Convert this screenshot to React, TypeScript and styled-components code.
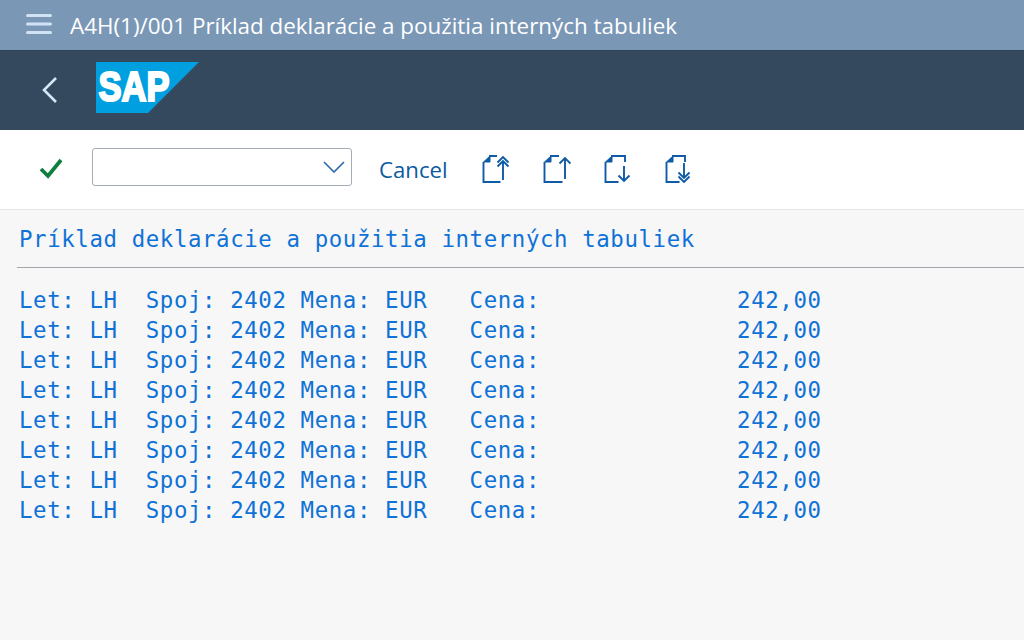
import { createGlobalStyle } from 'styled-components';
import styled from 'styled-components';

const GlobalStyle = createGlobalStyle`
  html, body {
    margin: 0;
    padding: 0;
    height: 100%;
    overflow: hidden;
    background: #f7f7f7;
  }
`;

const Page = styled.div`
  width: 1024px;
  height: 640px;
  display: flex;
  flex-direction: column;
  background: #f7f7f7;
  font-family: 'Open Sans', 'Noto Sans', sans-serif;
`;

const TitleBar = styled.header`
  height: 50px;
  box-sizing: border-box;
  flex: none;
  display: flex;
  align-items: center;
  gap: 18px;
  padding: 0 0 0 26px;
  background: #7b97b6;
`;

const TitleText = styled.span`
  color: #ffffff;
  font-size: 22.4px;
  white-space: nowrap;
`;

const BrandBar = styled.div`
  height: 80px;
  box-sizing: border-box;
  flex: none;
  display: flex;
  align-items: center;
  gap: 38px;
  padding: 0 0 6px 41px;
  background: #34495e;
  border-top: 1px solid #2f4356;
`;

const ToolBar = styled.div`
  height: 80px;
  box-sizing: border-box;
  flex: none;
  display: flex;
  align-items: center;
  padding: 0 0 2px 39px;
  background: #ffffff;
  border-bottom: 1px solid #e5e5e5;
`;

const ComboBox = styled.div`
  width: 260px;
  height: 38px;
  box-sizing: border-box;
  margin: 0 0 4px 29px;
  display: flex;
  align-items: center;
  justify-content: flex-end;
  padding-right: 6px;
  background: #ffffff;
  border: 1px solid #a6acb3;
  border-radius: 3px;
`;

const CancelButton = styled.span`
  margin: 2px 34px 0 27px;
  color: #0a5a9e;
  font-size: 22.2px;
`;

const PageIcons = styled.div`
  display: flex;
  align-items: center;
  gap: 33px;
`;

const ListArea = styled.main`
  flex: 1;
  padding: 14px 0 0 19px;
  color: #0f72d6;
  font-family: 'DejaVu Sans Mono', monospace;
  font-size: 22.4px;
  letter-spacing: 0.6px;
`;

const ListTitle = styled.div`
  height: 30px;
  line-height: 30px;
  white-space: pre;
`;

const Rule = styled.hr`
  height: 1px;
  margin: 13px 0 17px -2px;
  border: 0;
  background: #a3a7ad;
`;

const ListRow = styled.div`
  height: 30px;
  line-height: 30px;
  white-space: pre;
`;

const HamburgerSvg = styled.svg`
  margin-bottom: 2px;
`;

const ChevronSvg = styled.svg`
  margin-top: 5px;
`;

function Hamburger() {
  return (
    <HamburgerSvg width="26" height="22" viewBox="0 0 26 22" fill="none" stroke="#cfe3f5" strokeWidth="3" strokeLinecap="round">
      <path d="M1.5 2.5h23M1.5 11h23M1.5 19.5h23" />
    </HamburgerSvg>
  );
}

function BackChevron() {
  return (
    <ChevronSvg width="17" height="28" viewBox="0 0 17 28" fill="none" stroke="#d5e8f8" strokeWidth="2.6">
      <path d="M15 2 3 14l12 12" />
    </ChevronSvg>
  );
}

function SapLogo() {
  return (
    <svg width="103" height="51" viewBox="0 0 103 51">
      <polygon points="0,0 103,0 52,51 0,51" fill="#009fdf" />
      <text
        x="2.5"
        y="38.5"
        fill="#ffffff"
        fontFamily="'Liberation Sans', sans-serif"
        fontWeight="700"
        fontSize="43"
        textLength="71"
        lengthAdjust="spacingAndGlyphs"
        stroke="#ffffff"
        strokeWidth="2.2"
      >
        SAP
      </text>
    </svg>
  );
}

function CheckMark() {
  return (
    <svg width="24" height="24" viewBox="0 0 24 24" fill="none" stroke="#107e3e" strokeWidth="3.8">
      <path d="M2 12l7 7L22 3" />
    </svg>
  );
}

function ComboChevron() {
  return (
    <svg width="22" height="12" viewBox="0 0 22 12" fill="none" stroke="#2a68b0" strokeWidth="1.6">
      <path d="M1 1l10 10L21 1" />
    </svg>
  );
}

const pageIcons = [
  // first page: double arrow up
  'M1.5 7v20h17M7 1h8M21 6v19M15.5 7.5 21 2l5.5 5.5M15.5 11.5 21 6l5.5 5.5',
  // previous page: single arrow up
  'M1.5 7v20h18M7 1h9M22 3v21M16.5 8.5 22 3l5.5 5.5',
  // next page: single arrow down
  'M1.5 7v20h13M7 1h14v6M20 11v15M14.5 20.5 20 26l5.5-5.5',
  // last page: double arrow down
  'M1.5 7v20h13M7 1h13v6M19 8v15M13.5 17.5 19 23l5.5-5.5M13.5 21.5 19 27l5.5-5.5',
];

function PageIcon({ d }: { d: string }) {
  return (
    <svg width="28" height="28" viewBox="0 0 28 28" fill="none" stroke="#0f5ba7" strokeWidth="1.9">
      <path d={d} />
      <path d="M1.5 7H8V1z" fill="#0f5ba7" strokeWidth="1" />
    </svg>
  );
}

const rows = Array.from({ length: 8 }, (_, i) => i);

export default function App() {
  return (
    <Page>
      <GlobalStyle />
      <TitleBar>
        <Hamburger />
        <TitleText>A4H(1)/001 Príklad deklarácie a použitia interných tabuliek</TitleText>
      </TitleBar>
      <BrandBar>
        <BackChevron />
        <SapLogo />
      </BrandBar>
      <ToolBar>
        <CheckMark />
        <ComboBox>
          <ComboChevron />
        </ComboBox>
        <CancelButton>Cancel</CancelButton>
        <PageIcons>
          {pageIcons.map((d) => (
            <PageIcon key={d} d={d} />
          ))}
        </PageIcons>
      </ToolBar>
      <ListArea>
        <ListTitle>Príklad deklarácie a použitia interných tabuliek</ListTitle>
        <Rule />
        {rows.map((i) => (
          <ListRow key={i}>{'Let: LH  Spoj: 2402 Mena: EUR   Cena:              242,00'}</ListRow>
        ))}
      </ListArea>
    </Page>
  );
}
